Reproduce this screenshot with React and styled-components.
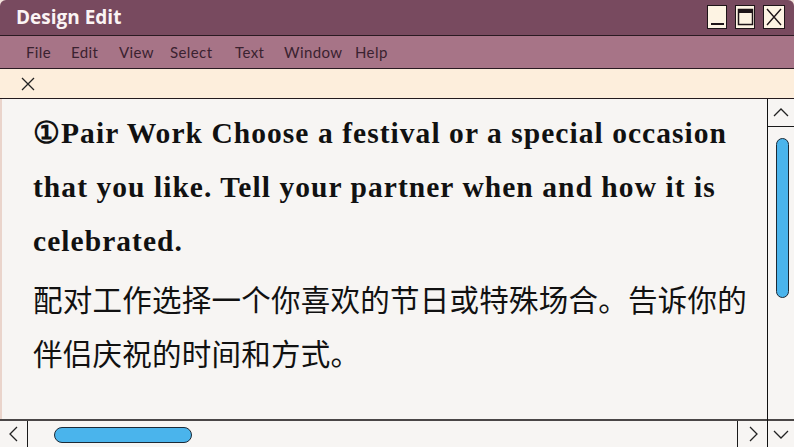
import React from "react";
import styled, { createGlobalStyle } from "styled-components";

const Global = createGlobalStyle`
  html, body { margin: 0; padding: 0; background: #f3e3dc; }
  body { width: 794px; height: 447px; overflow: hidden; }
  * { box-sizing: border-box; }
`;

const Window = styled.div`
  width: 794px;
  height: 447px;
  display: flex;
  flex-direction: column;
  overflow: hidden;
  border-radius: 6px 6px 0 0;
`;

const TitleBar = styled.div`
  height: 36px;
  flex: none;
  background: #784a5f;
  border-bottom: 1.5px solid #2a1a22;
  display: flex;
  align-items: center;
  justify-content: space-between;
  padding: 0 9px 0 16px;
`;

const Title = styled.div`
  font-family: "Open Sans", "Noto Sans", sans-serif;
  font-weight: 700;
  font-size: 19px;
  color: #fbf4f4;
  letter-spacing: 0px;
  margin-top: -2px;
`;

const Controls = styled.div`
  display: flex;
  gap: 8px;
  margin-top: -2px;
`;

const WinButton = styled.div`
  width: ${(p) => p.$w || 20}px;
  height: 24px;
  background: #fdf3e3;
  border: 1.5px solid #1e1418;
  display: flex;
  align-items: center;
  justify-content: center;
`;

const MenuBar = styled.div`
  height: 33px;
  flex: none;
  background: #a77487;
  border-bottom: 1.5px solid #2a1a22;
  display: flex;
  align-items: center;
  padding: 0 0 0 26px;
`;

const MenuItem = styled.div`
  font-family: "Lato", "Open Sans", sans-serif;
  font-size: 15px;
  color: #3a2230;
  width: ${(p) => p.$w}px;
  letter-spacing: 0.4px;
`;

const Toolbar = styled.div`
  height: 30px;
  flex: none;
  background: #fdeedc;
  border-bottom: 1.5px solid #231a1e;
  display: flex;
  align-items: center;
  padding-left: 21px;
`;

const Body = styled.div`
  flex: 1;
  display: flex;
  min-height: 0;
`;

const MainColumn = styled.div`
  flex: 1;
  display: flex;
  flex-direction: column;
  min-width: 0;
`;

const Content = styled.div`
  flex: 1;
  background: #f7f5f3;
  border-left: 2px solid #ead4cb;
  padding: 7px 0 0 31px;
  overflow: hidden;
`;

const English = styled.p`
  margin: 0;
  font-family: "Liberation Serif", "DejaVu Serif", serif;
  font-weight: 700;
  font-size: 29.5px;
  line-height: 54px;
  color: #111;
  letter-spacing: 1.05px;
  white-space: nowrap;
`;

const Line = styled.span`
  display: block;
`;

const Chinese = styled.p`
  margin: 3px 0 0;
  font-family: "Noto Sans CJK SC", "Noto Sans", sans-serif;
  font-weight: 400;
  font-size: 29.5px;
  letter-spacing: 0.25px;
  line-height: 54px;
  color: #111;
  width: 730px;
`;

const HScroll = styled.div`
  height: 28px;
  flex: none;
  background: #f7f5f3;
  border-top: 2px solid #4a4646;
  display: flex;
  align-items: stretch;
`;

const ArrowBox = styled.div`
  width: ${(p) => p.$w || 28}px;
  height: ${(p) => p.$h || 26}px;
  flex: none;
  display: flex;
  align-items: center;
  justify-content: center;
  border-right: ${(p) => (p.$br ? "1.5px solid #1a1a1a" : "none")};
  border-left: ${(p) => (p.$bl ? "1.5px solid #1a1a1a" : "none")};
  border-bottom: ${(p) => (p.$bb ? "1.5px solid #1a1a1a" : "none")};
  border-top: ${(p) => (p.$bt ? "2px solid #4a4646" : "none")};
`;

const HTrack = styled.div`
  flex: 1;
  display: flex;
  align-items: center;
  padding-left: 26px;
`;

const HThumb = styled.div`
  width: 138px;
  height: 16px;
  background: #4ab4ec;
  border: 1.5px solid #1c2a36;
  border-radius: 8px;
  margin-top: 1px;
`;

const VScroll = styled.div`
  width: 27px;
  flex: none;
  background: #f7f5f3;
  border-left: 1.5px solid #111;
  display: flex;
  flex-direction: column;
`;

const VTrack = styled.div`
  flex: 1;
  display: flex;
  justify-content: center;
  padding-top: 11px;
  padding-left: 2px;
`;

const VThumb = styled.div`
  width: 13px;
  height: 160px;
  background: #4ab4ec;
  border: 1.5px solid #1c2a36;
  border-radius: 7px;
`;

const Chevron = ({ dir }) => {
  const paths = {
    up: "M2 10 L9 3 L16 10",
    down: "M2 4 L9 11 L16 4",
    left: "M10 2 L3 9 L10 16",
    right: "M4 2 L11 9 L4 16",
  };
  const vertical = dir === "up" || dir === "down";
  return (
    <svg
      width={vertical ? 18 : 14}
      height={vertical ? 14 : 18}
      viewBox={vertical ? "0 0 18 14" : "0 0 14 18"}
      fill="none"
      stroke="#222"
      strokeWidth="1.3"
    >
      <path d={paths[dir]} />
    </svg>
  );
};

const menu = [
  ["File", 45],
  ["Edit", 48],
  ["View", 51],
  ["Select", 65],
  ["Text", 49],
  ["Window", 71],
  ["Help", 40],
];

export default function App() {
  return (
    <>
      <Global />
      <Window>
        <TitleBar>
          <Title>Design Edit</Title>
          <Controls>
            <WinButton>
              <svg width="17" height="20" viewBox="0 0 17 20">
                <path d="M2 17 H15" stroke="#1e1418" strokeWidth="2" />
              </svg>
            </WinButton>
            <WinButton>
              <svg width="17" height="20" viewBox="0 0 17 20">
                <rect x="1.5" y="2.5" width="14" height="15" fill="none" stroke="#1e1418" strokeWidth="1.5" />
                <rect x="1.5" y="2.5" width="14" height="3.5" fill="#1e1418" />
              </svg>
            </WinButton>
            <WinButton $w={22}>
              <svg width="18" height="20" viewBox="0 0 18 20">
                <path d="M2 2 L16 18 M16 2 L2 18" stroke="#1e1418" strokeWidth="1.4" />
              </svg>
            </WinButton>
          </Controls>
        </TitleBar>
        <MenuBar>
          {menu.map(([t, w]) => (
            <MenuItem key={t} $w={w}>
              {t}
            </MenuItem>
          ))}
        </MenuBar>
        <Toolbar>
          <svg width="14" height="14" viewBox="0 0 14 14">
            <path d="M1 1 L13 13 M13 1 L1 13" stroke="#222" strokeWidth="1.3" />
          </svg>
        </Toolbar>
        <Body>
          <MainColumn>
            <Content>
              <English>
                <Line>①Pair Work Choose a festival or a special occasion</Line>
                <Line>that you like. Tell your partner when and how it is</Line>
                <Line>celebrated.</Line>
              </English>
              <Chinese>
                配对工作选择一个你喜欢的节日或特殊场合。告诉你的伴侣庆祝的时间和方式。
              </Chinese>
            </Content>
            <HScroll>
              <ArrowBox $br>
                <Chevron dir="left" />
              </ArrowBox>
              <HTrack>
                <HThumb />
              </HTrack>
              <ArrowBox $bl $w={30}>
                <Chevron dir="right" />
              </ArrowBox>
            </HScroll>
          </MainColumn>
          <VScroll>
            <ArrowBox $bb $w={26} $h={28}>
              <Chevron dir="up" />
            </ArrowBox>
            <VTrack>
              <VThumb />
            </VTrack>
            <ArrowBox $bt $w={26} $h={28}>
              <Chevron dir="down" />
            </ArrowBox>
          </VScroll>
        </Body>
      </Window>
    </>
  );
}
